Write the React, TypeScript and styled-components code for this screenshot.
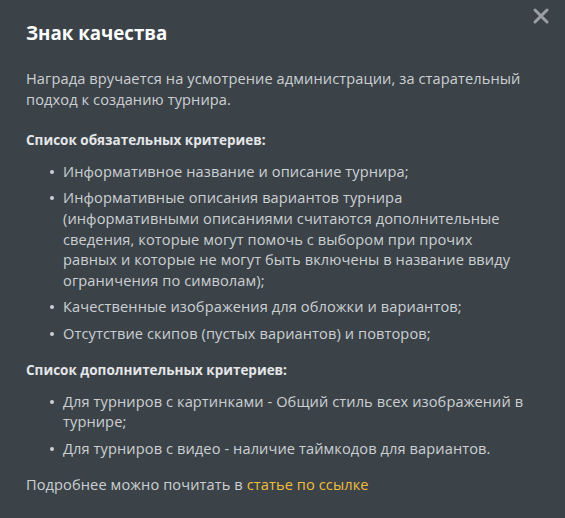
import React from 'react';
import styled, { createGlobalStyle } from 'styled-components';

const GlobalStyle = createGlobalStyle`
	html, body {
		margin: 0;
		padding: 0;
		background: #3b4349;
	}
	body {
		font-family: 'Open Sans', 'Noto Sans', sans-serif;
	}
`;

const Modal = styled.div`
	position: relative;
	width: 565px;
	height: 518px;
	box-sizing: border-box;
	padding: 20px 26px 0 26px;
	background: #3b4349;
	color: #cdd0d3;
	font-size: 14.6px;
	letter-spacing: 0.1px;
	line-height: 20.6px;
`;

const Close = styled.button`
	position: absolute;
	top: 7px;
	right: 15px;
	width: 18px;
	height: 18px;
	padding: 0;
	border: none;
	background: none;
	cursor: pointer;
	color: #9b9fa3;
`;

const Title = styled.h2`
	margin: 0 0 22px;
	font-size: 18.7px;
	line-height: 26px;
	font-weight: 700;
	letter-spacing: 0;
	color: #ffffff;
`;

const Text = styled.p<{ $gap?: number }>`
	margin: 0 0 ${(p) => p.$gap ?? 0}px;
`;

const Heading = styled.p`
	margin: 0 0 10.6px;
	font-size: 13.5px;
	font-weight: 700;
	letter-spacing: 0;
	color: #e4e6e8;
`;

const List = styled.ul`
	margin: 0 0 16px;
	padding: 0 0 0 37px;
	list-style: none;
`;

const Item = styled.li`
	position: relative;
	margin-bottom: 6px;

	&::before {
		content: '';
		position: absolute;
		left: -13px;
		top: 9px;
		width: 4px;
		height: 4px;
		border-radius: 50%;
		background: #cdd0d3;
	}
`;

const Link = styled.a`
	color: #f0bd3c;
	text-decoration: none;
`;

export default function App() {
	return (
		<>
			<GlobalStyle />
			<Modal>
				<Close aria-label="Закрыть">
					<svg viewBox="0 0 18 18" width="18" height="18">
						<path d="M3 3 L15 15 M15 3 L3 15" stroke="currentColor" strokeWidth="3" strokeLinecap="round" />
					</svg>
				</Close>
				<Title>Знак качества</Title>
				<Text $gap={20.4}>
					Награда вручается на усмотрение администрации, за старательный подход к созданию турнира.
				</Text>
				<Heading>Список обязательных критериев:</Heading>
				<List>
					<Item>Информативное название и описание турнира;</Item>
					<Item>
						Информативные описания вариантов турнира (информативными описаниями считаются дополнительные
						сведения, которые могут помочь с выбором при прочих
						<br />
						равных и которые не могут быть включены в название ввиду ограничения по символам);
					</Item>
					<Item>Качественные изображения для обложки и вариантов;</Item>
					<Item>Отсутствие скипов (пустых вариантов) и повторов;</Item>
				</List>
				<Heading>Список дополнительных критериев:</Heading>
				<List>
					<Item>Для турниров с картинками - Общий стиль всех изображений в турнире;</Item>
					<Item>Для турниров с видео - наличие таймкодов для вариантов.</Item>
				</List>
				<Text>
					Подробнее можно почитать в <Link href="#">статье по ссылке</Link>
				</Text>
			</Modal>
		</>
	);
}
